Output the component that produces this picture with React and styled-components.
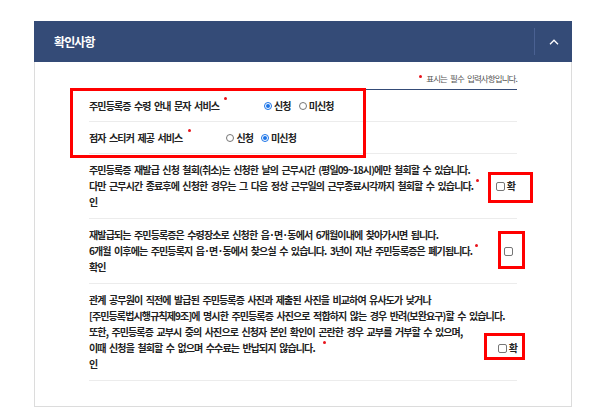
import React from "react";
import styled, { createGlobalStyle } from "styled-components";

const GlobalStyle = createGlobalStyle`
  html, body {
    margin: 0;
    padding: 0;
    background: #fff;
  }
  body {
    font-family: "Noto Sans CJK KR", "Noto Sans", sans-serif;
    color: #222;
    letter-spacing: -0.055em;
    word-spacing: 2px;
  }
`;

const Page = styled.div`
  position: relative;
  width: 600px;
  height: 413px;
  padding-top: 21px;
  box-sizing: border-box;
`;

const Panel = styled.section`
  margin-left: 34px;
  width: 538px;
  height: 386px;
  box-sizing: border-box;
  border: 1px solid #dcdcdc;
  border-top: none;
  display: flex;
  flex-direction: column;
`;

const Header = styled.div`
  height: 41px;
  margin: 0 -1px;
  background: #344b77;
  display: flex;
  align-items: center;
  h2 {
    flex: 1;
    margin: 0;
    padding-left: 20px;
    font-size: 12px;
    font-weight: 700;
    color: #fff;
  }
`;

const Toggle = styled.button`
  width: 38px;
  height: 27px;
  border: none;
  border-left: 1px solid #4a6192;
  background: transparent;
  display: flex;
  align-items: center;
  justify-content: center;
  padding: 0;
  cursor: pointer;
`;

const Body = styled.div`
  padding: 6px 54px 0 54px;
`;

const Note = styled.p`
  margin: 0;
  height: 20px;
  display: flex;
  align-items: center;
  justify-content: flex-end;
  font-size: 8.5px;
  color: #555;
  border-bottom: 1px solid #344b77;
  padding-bottom: 1px;
`;

const Dot = styled.span`
  display: inline-block;
  width: 3px;
  height: 3px;
  border-radius: 50%;
  background: #e8141c;
  align-self: center;
  margin: 0 ${(p) => p.$right ?? 0}px ${(p) => (p.$lift ?? 0) * 2}px ${(p) => p.$left ?? 4}px;
  flex-shrink: 0;
`;

const OptionRow = styled.div`
  height: 31px;
  display: flex;
  align-items: center;
  border-bottom: 1px solid #ececec;
  font-size: 10px;
  font-weight: 700;
`;

const Label = styled.span`
  white-space: pre;
`;

const RadioGroup = styled.div`
  display: flex;
  align-items: center;
  gap: 8px;
  margin-left: ${(p) => p.$gap}px;
`;

const RadioItem = styled.label`
  display: flex;
  align-items: center;
  gap: 2px;
`;

const Radio = styled.span`
  width: 8px;
  height: 8px;
  border-radius: 50%;
  box-sizing: border-box;
  border: 1px solid ${(p) => (p.$checked ? "#1a73e8" : "#767676")};
  background: #fff;
  position: relative;
  &::after {
    content: "";
    display: ${(p) => (p.$checked ? "block" : "none")};
    position: absolute;
    inset: 1px;
    border-radius: 50%;
    background: #1a73e8;
  }
`;

const Agreement = styled.div`
  padding: 8px 0;
  border-bottom: 1px solid #ececec;
  font-size: 10px;
  font-weight: 700;
  line-height: 16px;
`;

const Line = styled.div`
  display: flex;
  align-items: center;
  height: 16px;
  white-space: pre;
`;

const CheckGroup = styled.label`
  margin-left: auto;
  margin-right: ${(p) => p.$right ?? 0}px;
  display: flex;
  align-items: center;
  gap: 2px;
`;

const Checkbox = styled.span`
  width: 9px;
  height: 9px;
  box-sizing: border-box;
  border: 1px solid #767676;
  border-radius: 2px;
  background: #fff;
`;

const Mark = styled.div`
  position: absolute;
  box-sizing: border-box;
  border: 3px solid #ff0000;
  pointer-events: none;
`;

const ChevronUp = () => (
  <svg width="10" height="6" viewBox="0 0 10 6" fill="none">
    <path d="M1 5.2 L5 1.2 L9 5.2" stroke="#fff" strokeWidth="1.3" />
  </svg>
);

const agreements = [
  {
    lines: [
      "주민등록증 재발급 신청 철회(취소)는 신청한 날의 근무시간 (평일09~18시)에만 철회할 수 있습니다.",
      "다만 근무시간 종료후에 신청한 경우는 그 다음 정상 근무일의 근무종료시각까지 철회할 수 있습니다.",
    ],
    checkText: "확",
    rest: "인",
    right: 2,
  },
  {
    lines: [
      "재발급되는 주민등록증은 수령장소로 신청한 읍·면·동에서 6개월이내에 찾아가시면 됩니다.",
      "6개월 이후에는 주민등록지 읍·면·동에서 찾으실 수 있습니다. 3년이 지난 주민등록증은 폐기됩니다.",
    ],
    checkText: "",
    rest: "확인",
    right: 4,
  },
  {
    lines: [
      "관계 공무원이 직전에 발급된 주민등록증 사진과 제출된 사진을 비교하여 유사도가 낮거나",
      "[주민등록법시행규칙제9조]에 명시한 주민등록증 사진으로 적합하지 않는 경우 반려(보완요구)할 수 있습니다.",
      "또한, 주민등록증 교부시 중의 사진으로 신청자 본인 확인이 곤란한 경우 교부를 거부할 수 있으며,",
      "이때 신청을 철회할 수 없으며 수수료는 반납되지 않습니다.",
    ],
    checkText: "확",
    rest: "인",
    right: 0,
    dotLeft: 8,
  },
];

export default function App() {
  return (
    <Page>
      <GlobalStyle />
      <Panel>
        <Header>
          <h2>확인사항</h2>
          <Toggle aria-label="접기">
            <ChevronUp />
          </Toggle>
        </Header>
        <Body>
          <Note>
            <Dot $lift={2} $left={0} $right={4} />
            표시는 필수 입력사항입니다.
          </Note>

          <OptionRow>
            <Label>주민등록증 수령 안내 문자 서비스</Label>
            <Dot $lift={7} $left={5} />
            <RadioGroup $gap={37}>
              <RadioItem>
                <Radio $checked />
                신청
              </RadioItem>
              <RadioItem>
                <Radio />
                미신청
              </RadioItem>
            </RadioGroup>
          </OptionRow>
          <OptionRow>
            <Label>점자 스티커 제공 서비스</Label>
            <Dot $lift={7} $left={6} />
            <RadioGroup $gap={35}>
              <RadioItem>
                <Radio />
                신청
              </RadioItem>
              <RadioItem>
                <Radio $checked />
                미신청
              </RadioItem>
            </RadioGroup>
          </OptionRow>

          {agreements.map((a, i) => (
            <Agreement key={i}>
              {a.lines.map((text, j) =>
                j < a.lines.length - 1 ? (
                  <Line key={j}>{text}</Line>
                ) : (
                  <Line key={j}>
                    {text}
                    <Dot $lift={6} $left={a.dotLeft ?? 3} />
                    <CheckGroup $right={a.right}>
                      <Checkbox />
                      {a.checkText}
                    </CheckGroup>
                  </Line>
                )
              )}
              <Line>{a.rest}</Line>
            </Agreement>
          ))}
        </Body>
      </Panel>

      <Mark style={{ left: 70, top: 88, width: 296, height: 70 }} />
      <Mark style={{ left: 488, top: 172, width: 45, height: 31 }} />
      <Mark style={{ left: 498, top: 231, width: 27, height: 38 }} />
      <Mark style={{ left: 484, top: 333, width: 41, height: 27 }} />
    </Page>
  );
}
